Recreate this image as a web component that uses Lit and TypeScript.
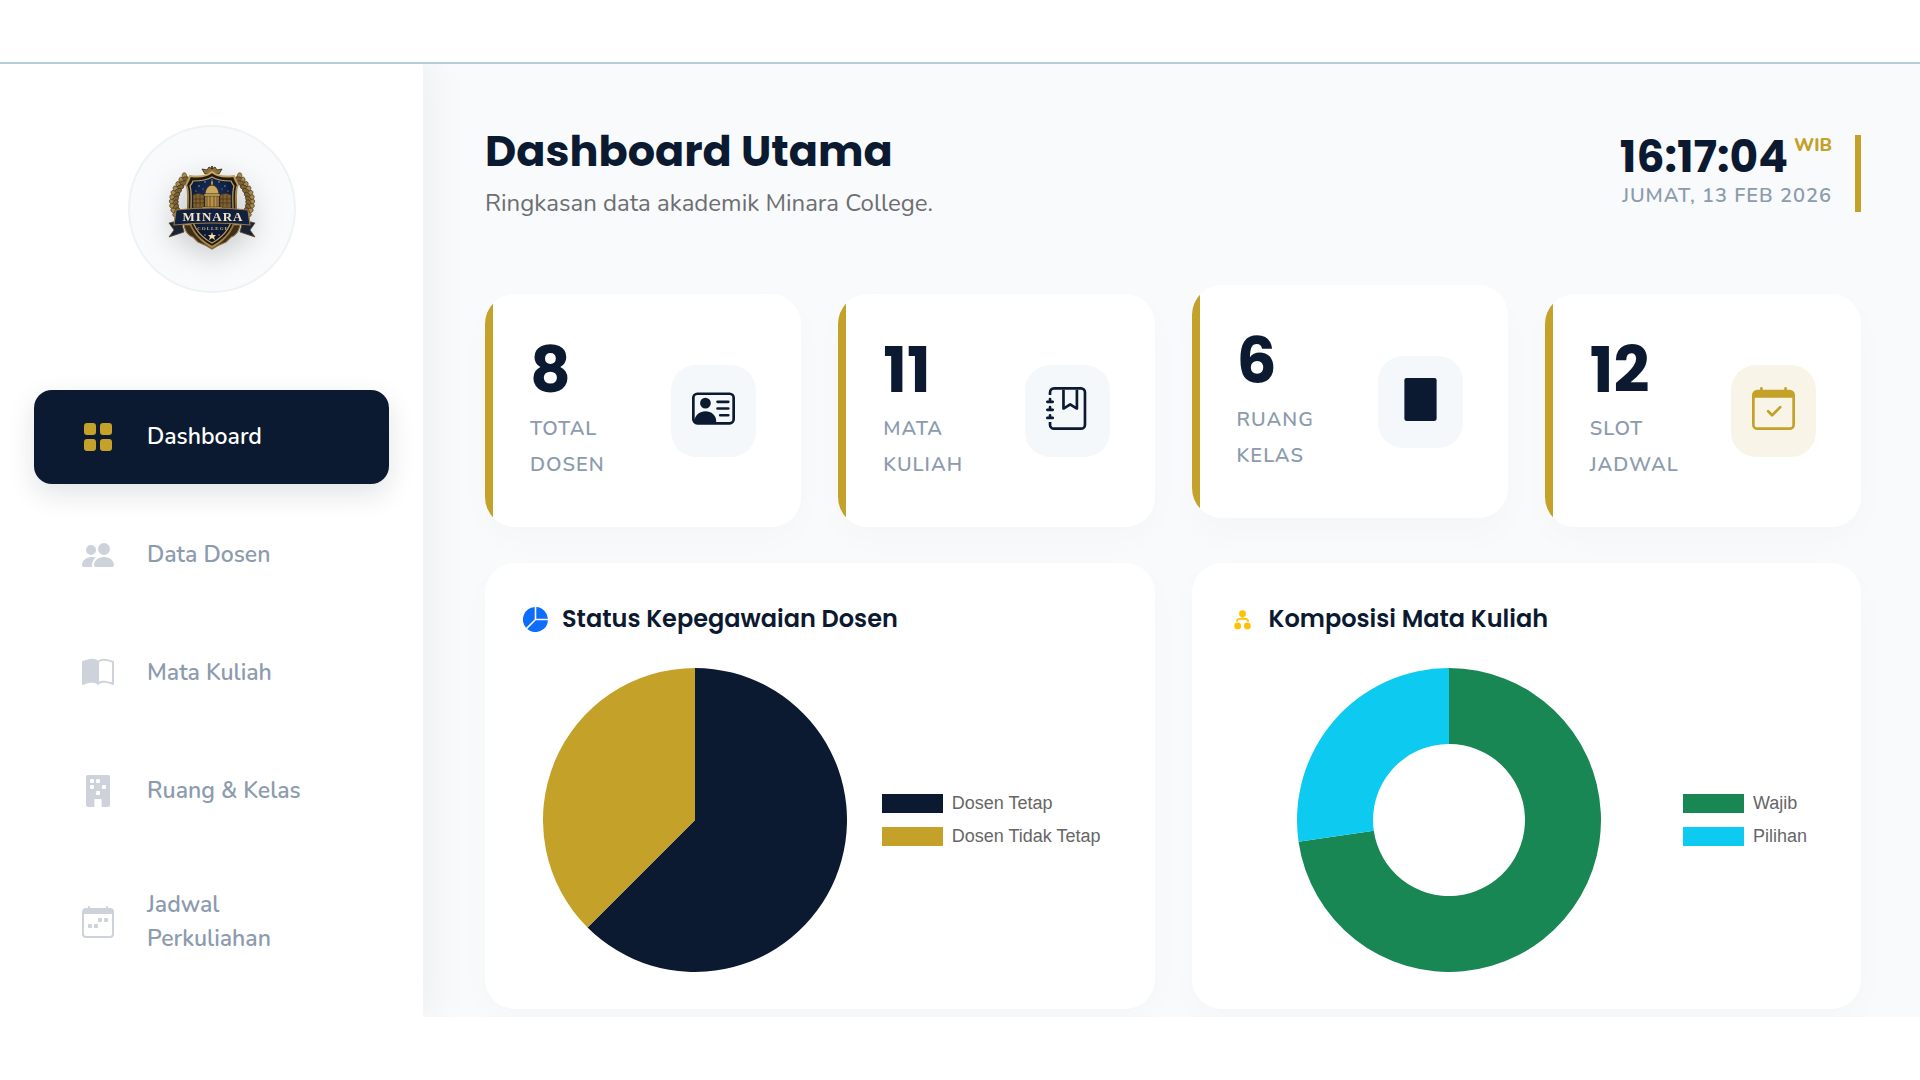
import { LitElement, html, svg, css, SVGTemplateResult } from "lit";
import { customElement, property } from "lit/decorators.js";

const calendarFrame =
  "M3.5 0a.5.5 0 0 1 .5.5V1h8V.5a.5.5 0 0 1 1 0V1h1a2 2 0 0 1 2 2v11a2 2 0 0 1-2 2H2a2 2 0 0 1-2-2V3a2 2 0 0 1 2-2h1V.5a.5.5 0 0 1 .5-.5M1 4v10a1 1 0 0 0 1 1h12a1 1 0 0 0 1-1V4z";

const icons: Record<string, SVGTemplateResult> = {
  grid: svg`<path d="M1 2.5A1.5 1.5 0 0 1 2.5 1h3A1.5 1.5 0 0 1 7 2.5v3A1.5 1.5 0 0 1 5.5 7h-3A1.5 1.5 0 0 1 1 5.5zm8 0A1.5 1.5 0 0 1 10.5 1h3A1.5 1.5 0 0 1 15 2.5v3A1.5 1.5 0 0 1 13.5 7h-3A1.5 1.5 0 0 1 9 5.5zm-8 8A1.5 1.5 0 0 1 2.5 9h3A1.5 1.5 0 0 1 7 10.5v3A1.5 1.5 0 0 1 5.5 15h-3A1.5 1.5 0 0 1 1 13.5zm8 0A1.5 1.5 0 0 1 10.5 9h3a1.5 1.5 0 0 1 1.5 1.5v3a1.5 1.5 0 0 1-1.5 1.5h-3A1.5 1.5 0 0 1 9 13.5z"/>`,
  people: svg`<path d="M7 14s-1 0-1-1 1-4 5-4 5 3 5 4-1 1-1 1zm4-6a3 3 0 1 0 0-6 3 3 0 0 0 0 6m-5.784 6A2.24 2.24 0 0 1 5 13c0-1.355.68-2.75 1.936-3.72A6.3 6.3 0 0 0 5 9c-4 0-5 3-5 4s1 1 1 1zM4.5 8a2.5 2.5 0 1 0 0-5 2.5 2.5 0 0 0 0 5"/>`,
  book: svg`<path d="M8.5 2.687c.654-.689 1.782-.886 3.112-.752 1.234.124 2.503.523 3.388.893v9.923c-.918-.35-2.107-.692-3.287-.81-1.094-.111-2.278-.039-3.213.492zM8 1.783C7.015.936 5.587.81 4.287.94c-1.514.153-3.042.672-3.994 1.105A.5.5 0 0 0 0 2.5v11a.5.5 0 0 0 .707.455c.882-.4 2.303-.881 3.68-1.02 1.409-.142 2.59.087 3.223.877a.5.5 0 0 0 .78 0c.633-.79 1.814-1.019 3.222-.877 1.378.139 2.8.62 3.681 1.02A.5.5 0 0 0 16 13.5v-11a.5.5 0 0 0-.293-.455c-.952-.433-2.48-.952-3.994-1.105C10.413.809 8.985.936 8 1.783"/>`,
  building: svg`<path fill-rule="evenodd" d="M3 0a1 1 0 0 0-1 1v14a1 1 0 0 0 1 1h3.2v-3.5a.5.5 0 0 1 .5-.5h2.6a.5.5 0 0 1 .5.5V16H13a1 1 0 0 0 1-1V1a1 1 0 0 0-1-1zM4.5 2h1a.5.5 0 0 1 .5.5v1a.5.5 0 0 1-.5.5h-1a.5.5 0 0 1-.5-.5v-1a.5.5 0 0 1 .5-.5M7.5 2h1a.5.5 0 0 1 .5.5v1a.5.5 0 0 1-.5.5h-1a.5.5 0 0 1-.5-.5v-1a.5.5 0 0 1 .5-.5M4.5 5h1a.5.5 0 0 1 .5.5v1a.5.5 0 0 1-.5.5h-1a.5.5 0 0 1-.5-.5v-1a.5.5 0 0 1 .5-.5M10.5 5h1a.5.5 0 0 1 .5.5v1a.5.5 0 0 1-.5.5h-1a.5.5 0 0 1-.5-.5v-1a.5.5 0 0 1 .5-.5M7.5 8h1a.5.5 0 0 1 .5.5v1a.5.5 0 0 1-.5.5h-1a.5.5 0 0 1-.5-.5v-1a.5.5 0 0 1 .5-.5"/>`,
  week: svg`<path d="M11 6.5a.5.5 0 0 1 .5-.5h1a.5.5 0 0 1 .5.5v1a.5.5 0 0 1-.5.5h-1a.5.5 0 0 1-.5-.5zm-3 0a.5.5 0 0 1 .5-.5h1a.5.5 0 0 1 .5.5v1a.5.5 0 0 1-.5.5h-1a.5.5 0 0 1-.5-.5zm-5 3a.5.5 0 0 1 .5-.5h1a.5.5 0 0 1 .5.5v1a.5.5 0 0 1-.5.5h-1a.5.5 0 0 1-.5-.5zm3 0a.5.5 0 0 1 .5-.5h1a.5.5 0 0 1 .5.5v1a.5.5 0 0 1-.5.5h-1a.5.5 0 0 1-.5-.5z"/><path d=${calendarFrame}/>`,
  check: svg`<path d="M10.854 7.146a.5.5 0 0 1 0 .708l-3 3a.5.5 0 0 1-.708 0l-1.5-1.5a.5.5 0 1 1 .708-.708L7.5 9.793l2.646-2.647a.5.5 0 0 1 .708 0"/><path d=${calendarFrame}/>`,
  vcard: svg`<path d="M5 8a2 2 0 1 0 0-4 2 2 0 0 0 0 4m4-2.5a.5.5 0 0 1 .5-.5h4a.5.5 0 0 1 0 1h-4a.5.5 0 0 1-.5-.5M9 8a.5.5 0 0 1 .5-.5h4a.5.5 0 0 1 0 1h-4A.5.5 0 0 1 9 8m1 2.5a.5.5 0 0 1 .5-.5h3a.5.5 0 0 1 0 1h-3a.5.5 0 0 1-.5-.5"/><path d="M2 2a2 2 0 0 0-2 2v8a2 2 0 0 0 2 2h12a2 2 0 0 0 2-2V4a2 2 0 0 0-2-2zM1 4a1 1 0 0 1 1-1h12a1 1 0 0 1 1 1v8a1 1 0 0 1-1 1H8.96q.04-.245.04-.5C9 10.567 7.21 9 5 9c-2.086 0-3.8 1.398-3.984 3.181A1 1 0 0 1 1 12z"/>`,
  journal: svg`<path fill-rule="evenodd" d="M6 8V1h1v6.117L8.743 6.07a.5.5 0 0 1 .514 0L11 7.117V1h1v7a.5.5 0 0 1-.757.429L9 7.083 6.757 8.43A.5.5 0 0 1 6 8"/><path d="M3 0h10a2 2 0 0 1 2 2v12a2 2 0 0 1-2 2H3a2 2 0 0 1-2-2v-1h1v1a1 1 0 0 0 1 1h10a1 1 0 0 0 1-1V2a1 1 0 0 0-1-1H3a1 1 0 0 0-1 1v1H1V2a2 2 0 0 1 2-2"/><path d="M1 5v-.5a.5.5 0 0 1 1 0V5h.5a.5.5 0 0 1 0 1h-2a.5.5 0 0 1 0-1zm0 3v-.5a.5.5 0 0 1 1 0V8h.5a.5.5 0 0 1 0 1h-2a.5.5 0 0 1 0-1zm0 3v-.5a.5.5 0 0 1 1 0v.5h.5a.5.5 0 0 1 0 1h-2a.5.5 0 0 1 0-1z"/>`,
  door: svg`<rect x="2" y="0" width="12" height="16" rx="0.8"/>`,
  pie: svg`<path d="M15.985 8.5H8.207l-5.5 5.5a8 8 0 0 0 13.277-5.5zM2 13.292A8 8 0 0 1 7.5.015v7.778zM8.5.015V7.5h7.485A8 8 0 0 0 8.5.015"/>`,
  nodes: svg`<circle cx="8" cy="4.3" r="2.2"/><circle cx="4.9" cy="12.1" r="2.2"/><circle cx="11.1" cy="12.1" r="2.2"/><path fill="none" stroke="currentColor" stroke-width="1.1" d="M8 6v1.6M4.4 9.4q0-1.8 1.8-1.8h3.6q1.8 0 1.8 1.8"/>`,
};

const icon = (name: string) =>
  html`<svg class="icon" viewBox="0 0 16 16" fill="currentColor" aria-hidden="true">${icons[name]}</svg>`;

const TURN = 2 * Math.PI;
/** Ring or pie sector between two fractions of a turn, clockwise from the top. */
function sector(from: number, to: number, inner: number): string {
  const at = (t: number, r: number) => `${100 + r * Math.sin(t * TURN)} ${100 - r * Math.cos(t * TURN)}`;
  const large = to - from > 0.5 ? 1 : 0;
  const back = inner ? `L${at(to, inner)}A${inner} ${inner} 0 ${large} 0 ${at(from, inner)}` : "L100 100";
  return `M${at(from, 100)}A100 100 0 ${large} 1 ${at(to, 100)}${back}Z`;
}

interface Slice { label: string; value: number; color: string; }

@customElement("chart-panel")
export class ChartPanel extends LitElement {
  @property() heading = "";
  @property() glyph = "";
  @property() tone = "";
  @property({ type: Number }) inner = 0;
  @property({ attribute: false }) slices: Slice[] = [];

  static styles = css`
    :host { display: block; background: #fff; border-radius: 30px; padding: 39px 36px 37px 38px; box-shadow: 0 12px 36px rgba(11, 26, 48, 0.02); }
    .title { display: flex; align-items: center; gap: 14px; margin: 0 0 32px; font: 600 24px/34px Poppins, sans-serif; color: #0b1a30; }
    .icon { width: 25px; height: 25px; flex: none; }
    .blue { color: #0d6efd; }
    .yellow { color: #ffc107; }
    .body { display: flex; align-items: center; }
    .plot { flex: 1; display: flex; justify-content: center; }
    .chart { width: 304px; height: 304px; display: block; }
    .legend { list-style: none; margin: 0; padding: 0 18px 0 14px; }
    .entry { display: flex; align-items: center; gap: 9px; font: 18px/33px "Liberation Sans", Arial, sans-serif; color: #666; }
    .swatch { width: 61px; height: 19px; }
  `;

  render() {
    const total = this.slices.reduce((s, x) => s + x.value, 0);
    let from = 0;
    return html`
      <h2 class="title"><svg class="icon ${this.tone}" viewBox="0 0 16 16" fill="currentColor" aria-hidden="true">${icons[this.glyph]}</svg>${this.heading}</h2>
      <div class="body">
        <div class="plot">
          <svg class="chart" viewBox="0 0 200 200" role="img" aria-label=${this.heading}>
            ${this.slices.map((s) => {
              const start = from;
              from += s.value / total;
              return svg`<path fill=${s.color} d=${sector(start, from, this.inner)}/>`;
            })}
          </svg>
        </div>
        <ul class="legend">
          ${this.slices.map((s) => html`<li class="entry"><span class="swatch" style="background:${s.color}"></span>${s.label}</li>`)}
        </ul>
      </div>`;
  }
}

@customElement("college-crest")
export class CollegeCrest extends LitElement {
  static styles = css`
    :host { display: block; }
    .crest { display: block; width: 100px; height: 100px; filter: drop-shadow(0 9px 14px rgba(0, 0, 0, 0.18)); }
    .name { font: 700 13px "Liberation Serif", serif; letter-spacing: 1px; fill: #f3e6c4; }
    .sub { font: 700 5px "Liberation Serif", serif; letter-spacing: 1px; fill: #c9b078; }
  `;

  private leaves() {
    return Array.from({ length: 11 }, (_, i) => {
      const t = i / 10;
      const x = 24 - 12 * Math.sin(t * 2.6);
      const y = 18 + 41 * t;
      const a = 40 - 75 * t;
      return svg`
        <ellipse cx=${x - 1.5} cy=${y} rx="2.4" ry="4.4" transform="rotate(${a - 45} ${x} ${y})" fill="#a58a52" stroke="#4a3719" stroke-width=".6"/>
        <ellipse cx=${x + 2} cy=${y + 1} rx="2.3" ry="4.2" transform="rotate(${a + 40} ${x} ${y})" fill="#7d6236" stroke="#3a2b14" stroke-width=".6"/>`;
    });
  }

  render() {
    return html`
      <svg class="crest" viewBox="0 0 100 100" role="img" aria-label="Minara College">
        <defs>
          <linearGradient id="gold" x1="0" y1="0" x2="0" y2="1"><stop offset="0" stop-color="#c9ad6c"/><stop offset=".5" stop-color="#7f6231"/><stop offset="1" stop-color="#a98a48"/></linearGradient>
          <radialGradient id="night" cx=".5" cy=".35" r=".7"><stop offset="0" stop-color="#1a3468"/><stop offset="1" stop-color="#081024"/></radialGradient>
        </defs>
        <g>${this.leaves()}</g>
        <g transform="matrix(-1 0 0 1 100 0)">${this.leaves()}</g>
        <path d="M22 66q2 10 9 12l5 5q8 3 14 7 6-4 14-7l5-5q7-2 9-12z" fill="#3d2e17" stroke="#80663a" stroke-width="1.2"/>
        <path d="M43 15l-3-5 5 1 2-3 3 2-1-2 1-1 1 1-1 2 3-2 2 3 5-1-3 5z" fill="#8f713b" stroke="#2f2311" stroke-width=".8"/>
        <path d="M50 13C44 18 35 18 28 17c-1 4-3 7-4 9 3 4 2 14 2 24 0 19 9 30 24 38 15-8 24-19 24-38 0-10-1-20 2-24-1-2-3-5-4-9-7 1-16 1-22-4z" fill="#241b0e" stroke="url(#gold)" stroke-width="2"/>
        <path d="M50 18c-6 4-13 4-19 4-1 3-2 4-3 5 2 5 1 14 1 23 0 17 8 27 21 34 13-7 21-17 21-34 0-9-1-18 1-23-1-1-2-3-3-5-6 0-13 0-19-4z" fill="url(#night)" stroke="#bda36d" stroke-width="1.2"/>
        <g fill="#9fb4dc"><circle cx="37" cy="27" r=".7"/><circle cx="43" cy="23" r=".7"/><circle cx="50" cy="21" r=".7"/><circle cx="57" cy="23" r=".7"/><circle cx="63" cy="27" r=".7"/><circle cx="34" cy="32" r=".6"/><circle cx="66" cy="32" r=".6"/><circle cx="41" cy="30" r=".5"/><circle cx="60" cy="30" r=".5"/></g>
        <g stroke="#3f2c0e" stroke-width=".6">
          <path d="M31 36q5-3 11 0v13H31zM58 36q6-3 11 0v13H58z" fill="#7f6232"/>
          <path d="M31 40h11M31 44h11M58 40h11M58 44h11M34 36v12M38 36v12M61 36v12M65 36v12" fill="none"/>
          <path d="M43 36h14v13H43z" fill="#b8924a"/>
          <path d="M43 35q1-8 7-9 6 1 7 9z" fill="#caa75b"/>
          <path d="M49 26v-4h2v4zM42 35h16v2H42zM40 48h20v3H40z" fill="#dcc07c"/>
          <path d="M45 37v11M48 37v11M52 37v11M55 37v11" fill="none"/>
        </g>
        <path d="M7 64l12-3 3 12-15 5 5-7zM93 64l-12-3-3 12 15 5-5-7z" fill="#1b2233" stroke="#5c4826" stroke-width=".8"/>
        <path d="M14 51q36-4 72 0l2 15q-38-4-76 0z" fill="#11203f" stroke="#967843" stroke-width="1.2"/>
        <text class="name" x="51" y="62" text-anchor="middle">MINARA</text>
        <text class="sub" x="51" y="71" text-anchor="middle">COLLEGE</text>
        <path d="M50 73l1 3h3l-2 2 1 3-3-2-3 2 1-3-2-2h3z" fill="#f5dfa0"/>
        <circle cx="43" cy="76" r=".7" fill="#c9b078"/><circle cx="57" cy="76" r=".7" fill="#c9b078"/>
      </svg>`;
  }
}

const navItems = [
  { label: "Dashboard", icon: "grid", active: true },
  { label: "Data Dosen", icon: "people" },
  { label: "Mata Kuliah", icon: "book" },
  { label: "Ruang & Kelas", icon: "building" },
  { label: "Jadwal Perkuliahan", icon: "week" },
];

const stats = [
  { value: 8, label: "Total Dosen", icon: "vcard" },
  { value: 11, label: "Mata Kuliah", icon: "journal" },
  { value: 6, label: "Ruang Kelas", icon: "door", mod: "raised" },
  { value: 12, label: "Slot Jadwal", icon: "check", mod: "gold" },
];

const staff: Slice[] = [
  { label: "Dosen Tetap", value: 5, color: "#0b1a30" },
  { label: "Dosen Tidak Tetap", value: 3, color: "#c4a128" },
];

const courses: Slice[] = [
  { label: "Wajib", value: 8, color: "#198754" },
  { label: "Pilihan", value: 3, color: "#0dcaf0" },
];

@customElement("app-root")
export class AppRoot extends LitElement {
  static styles = css`
    :host { display: block; background: #fff; font-family: Nunito, "Open Sans", sans-serif; color: #0b1a30; }
    * { box-sizing: border-box; }
    .page { padding: 62px 0; }
    .shell { display: flex; border-top: 2px solid #b3ced9; overflow: hidden; background: #f8fafb; }
    .sidebar { position: relative; z-index: 1; flex: none; width: 423px; padding: 61px 34px 0; background: #fff; box-shadow: 8px 0 40px rgba(11, 40, 60, 0.05); }
    .logo { width: 168px; height: 168px; margin: 0 auto 97px; border-radius: 50%; border: 2px solid #eff2f4; background: #f8fafb; display: grid; place-items: center; }
    .menu { list-style: none; margin: 0; padding: 0; display: grid; gap: 24px; }
    .link { display: flex; align-items: center; gap: 33px; min-height: 94px; padding: 26px 48px; border-radius: 18px; color: #8c9bad; font-size: 23px; line-height: 34px; font-weight: 600; text-decoration: none; }
    .link .icon { width: 32px; height: 32px; flex: none; color: #ced3db; }
    .link.active { background: #0b1a30; color: #fff; box-shadow: 0 10px 28px rgba(11, 26, 48, 0.12); }
    .link.active .icon { color: #c4a128; }
    .main { flex: 1; min-width: 0; padding: 61px 59px 8px 62px; }
    .header { display: flex; justify-content: space-between; align-items: center; margin-bottom: 73px; }
    .heading { margin: 0 0 8px; font: 700 43px/52px Poppins, sans-serif; }
    .lead { margin: 0; font-size: 24px; line-height: 36px; color: #6c6e72; }
    .clock { border-right: 6px solid #c4a128; padding-right: 23px; text-align: right; }
    .time { display: flex; justify-content: flex-end; gap: 6px; font: 700 44px/44px Poppins, sans-serif; }
    .zone { font: 800 18px/20px Nunito, sans-serif; color: #c4a128; }
    .date { font-size: 20px; line-height: 33px; font-weight: 600; letter-spacing: 1px; color: #8c9bad; text-transform: uppercase; }
    .stats { display: grid; grid-template-columns: repeat(4, 1fr); gap: 37px; margin-bottom: 36px; }
    .card { display: flex; align-items: center; justify-content: space-between; gap: 20px; padding: 44px 45px; border-radius: 30px; background: linear-gradient(to right, #c4a128 8px, #fff 8px); box-shadow: 0 12px 36px rgba(11, 26, 48, 0.02); }
    .card.raised { transform: translateY(-9px); box-shadow: 0 18px 36px rgba(11, 26, 48, 0.02); }
    .value { margin: 0 0 9px; font: 700 63px/64px Poppins, sans-serif; }
    .label { margin: 0; font-size: 20px; line-height: 36px; font-weight: 600; letter-spacing: 1px; color: #8c9bad; text-transform: uppercase; }
    .badge { flex: none; padding: 22px 21px 27px; border-radius: 25px; background: #f5f8fb; }
    .badge .icon { display: block; width: 43px; height: 43px; }
    .gold .badge { background: #f8f4e8; color: #c4a128; }
    .charts { display: grid; grid-template-columns: 1fr 1fr; gap: 37px; }
  `;

  render() {
    return html`
      <div class="page">
        <div class="shell">
          <aside class="sidebar">
            <div class="logo"><college-crest></college-crest></div>
            <nav aria-label="Menu">
              <ul class="menu">
                ${navItems.map((n) => html`<li><a class="link ${n.active ? "active" : ""}" href="#">${icon(n.icon)}<span>${n.label}</span></a></li>`)}
              </ul>
            </nav>
          </aside>
          <main class="main">
            <header class="header">
              <div>
                <h1 class="heading">Dashboard Utama</h1>
                <p class="lead">Ringkasan data akademik Minara College.</p>
              </div>
              <div class="clock">
                <div class="time"><span>16:17:04</span><span class="zone">WIB</span></div>
                <div class="date">Jumat, 13 Feb 2026</div>
              </div>
            </header>
            <section class="stats">
              ${stats.map((s) => html`
                <article class="card ${s.mod ?? ""}">
                  <div><p class="value">${s.value}</p><p class="label">${s.label}</p></div>
                  <div class="badge">${icon(s.icon)}</div>
                </article>`)}
            </section>
            <section class="charts">
              <chart-panel heading="Status Kepegawaian Dosen" glyph="pie" tone="blue" .slices=${staff}></chart-panel>
              <chart-panel heading="Komposisi Mata Kuliah" glyph="nodes" tone="yellow" inner="50" .slices=${courses}></chart-panel>
            </section>
          </main>
        </div>
      </div>`;
  }
}
